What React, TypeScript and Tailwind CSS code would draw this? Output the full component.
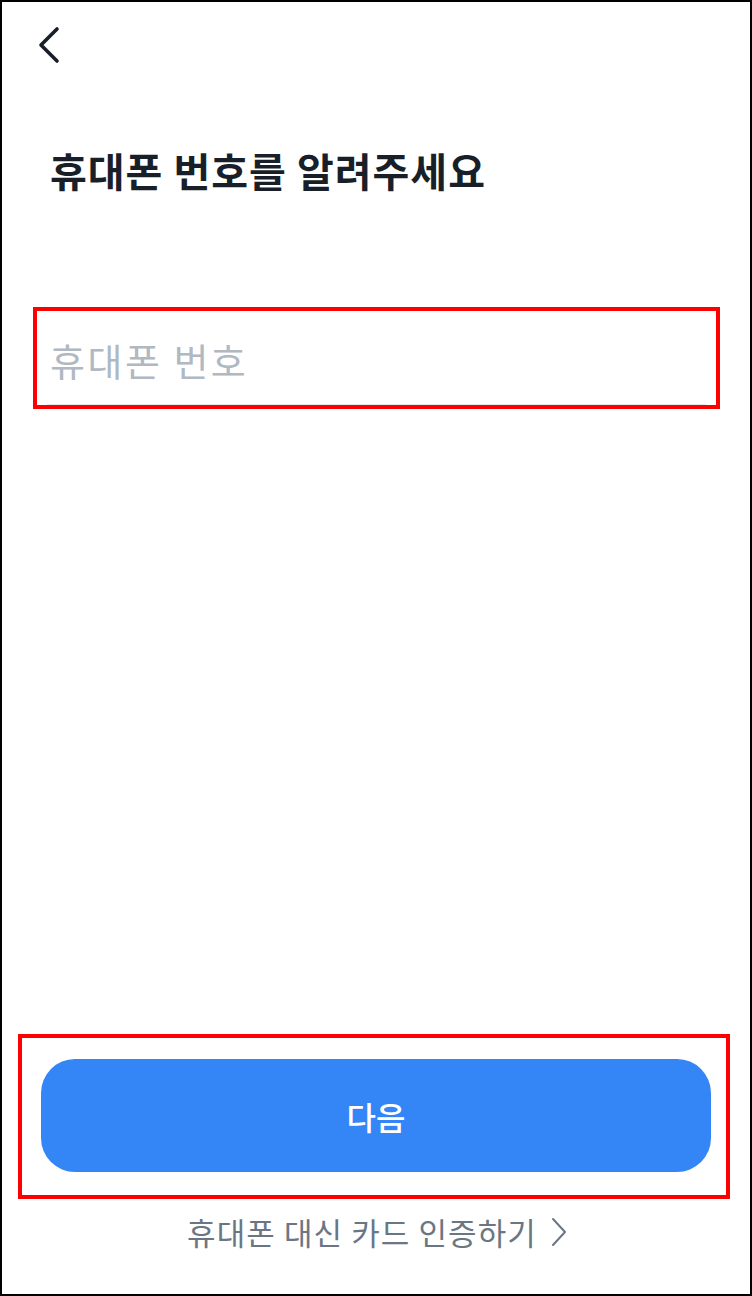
import React from 'react';

export default function App() {
  return (
    <div className="w-[752px] h-[1296px] bg-white border-2 border-black flex flex-col font-['Noto_Sans_CJK_KR',_'Noto_Sans',_sans-serif]">
      <div className="pl-[35px] pt-[24px]">
        <svg width="24" height="40" viewBox="0 0 24 40" fill="none">
          <path d="M20 3 L4 19 L20 35" stroke="#191f28" strokeWidth="3.6" strokeLinecap="round" strokeLinejoin="round" />
        </svg>
      </div>

      <h1 className="mt-[80px] pl-[48px] text-[40px] leading-[48px] font-bold text-[#191f28] tracking-[1px]">
        휴대폰 번호를 알려주세요
      </h1>

      <div className="mt-[113px] ml-[31px] mr-[30px] h-[102px] border-4 border-[#ff0000] flex items-center">
        <div className="flex-1 h-full flex items-center border-b border-[#e5e8eb] mx-[10px]">
          <span className="pl-[3px] pt-[4px] text-[38px] text-[#b0b8c1] tracking-[2.5px]">휴대폰 번호</span>
        </div>
      </div>

      <div className="flex-1" />

      <div className="ml-[16px] mr-[20px] border-4 border-[#ff0000] pl-[19px] pr-[15px] pt-[21px] pb-[23px]">
        <button className="w-full h-[113px] rounded-[34px] bg-[#3485f6] text-white text-[32px] font-medium">
          다음
        </button>
      </div>

      <div className="h-[95px] flex items-start justify-center pt-[10px] pl-[2px]">
        <span className="flex items-center gap-[14px] text-[31px] text-[#6b7684] tracking-[1.1px]">
          휴대폰 대신 카드 인증하기
          <svg width="16" height="30" viewBox="0 0 16 30" fill="none">
            <path d="M2 2 L14 15 L2 28" stroke="#6b7684" strokeWidth="2" strokeLinecap="round" strokeLinejoin="round" />
          </svg>
        </span>
      </div>
    </div>
  );
}
